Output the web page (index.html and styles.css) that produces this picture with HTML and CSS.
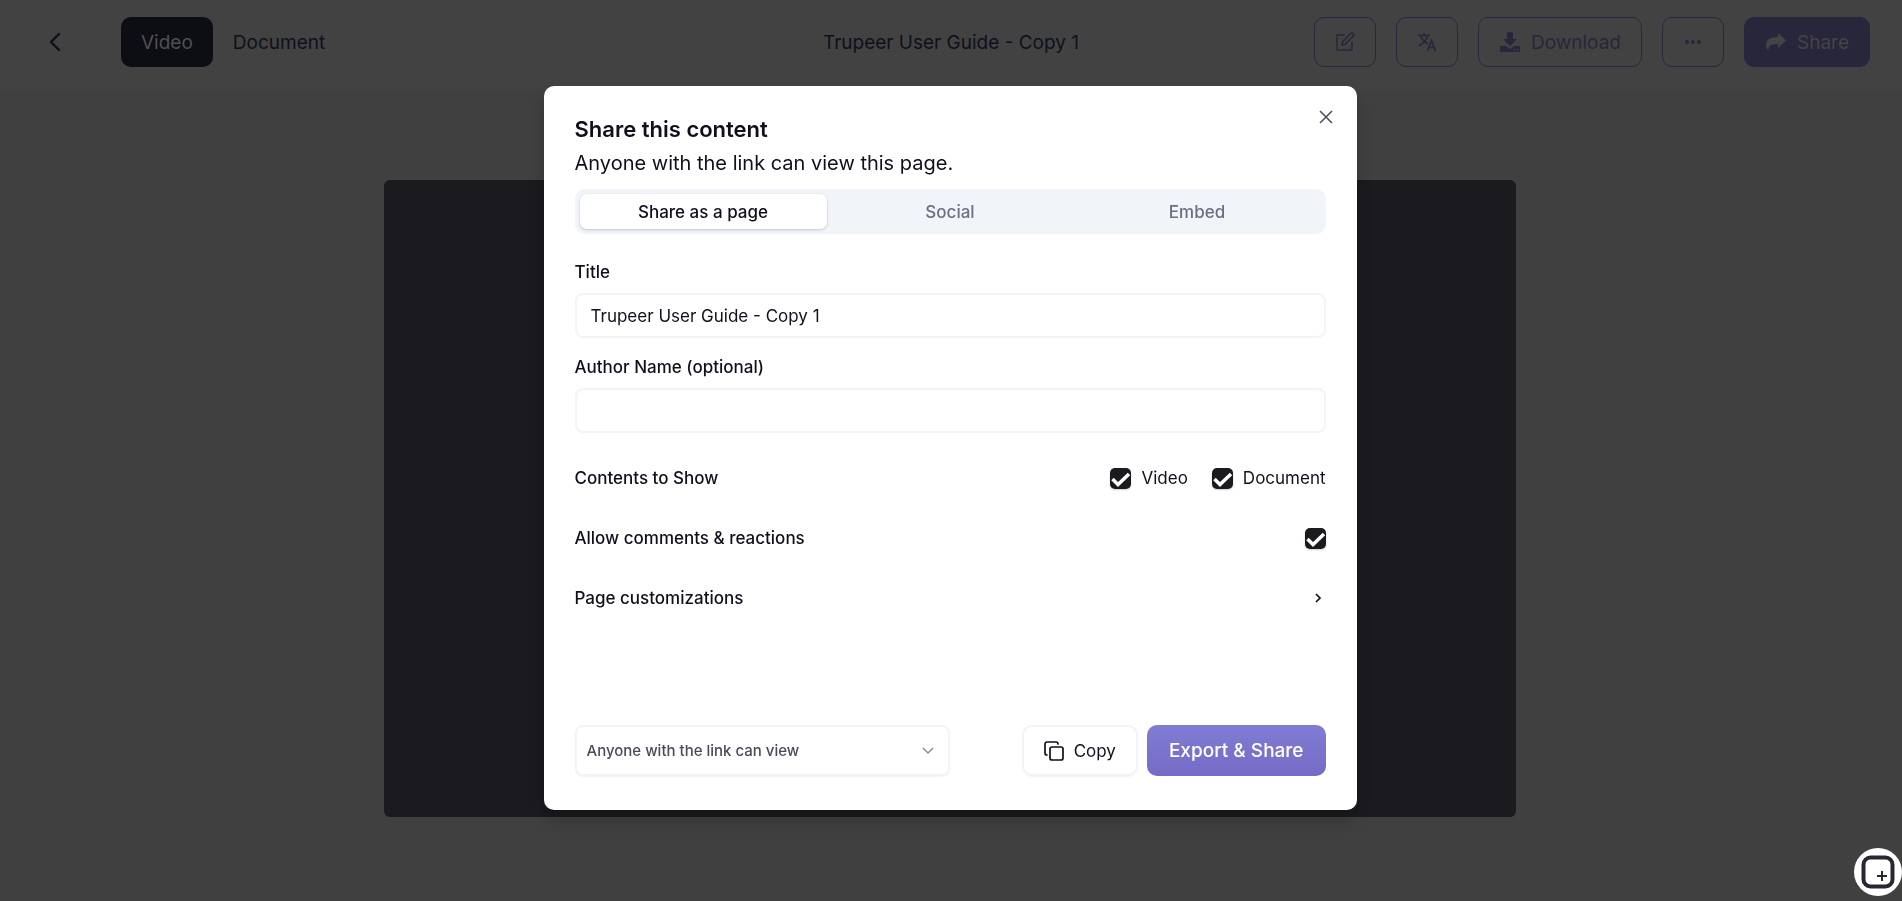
FILE: index.html
```html
<!DOCTYPE html>
<html lang="en">
<head>
    <meta charset="UTF-8">
    <meta name="viewport" content="width=device-width, initial-scale=1.0">
    <title>Trupeer User Guide - Copy 1</title>
    <link rel="stylesheet" href="styles.css">
</head>
<body>
    <header class="topbar">
        <div class="topbar-left">
            <button class="back" aria-label="Back">
                <svg width="12" height="20" viewBox="0 0 12 20" fill="none" stroke="currentColor" stroke-width="2.4" stroke-linecap="round" stroke-linejoin="round"><path d="M10 2 2 10l8 8"/></svg>
            </button>
            <nav class="view-switch">
                <button class="view active">Video</button>
                <button class="view">Document</button>
            </nav>
        </div>
        <div class="doc-name">Trupeer User Guide - Copy 1</div>
        <div class="actions">
            <button class="action icon-only" aria-label="Edit">
                <svg width="22" height="22" viewBox="0 0 22 22" fill="none" stroke="currentColor" stroke-width="1.6" stroke-linejoin="round"><path d="M11 4H3v15h15v-8"/><path d="m8 14 .6-3.4L16.8 2.4a1.4 1.4 0 0 1 2 0l.6.6a1.4 1.4 0 0 1 0 2L11.2 13.3z"/></svg>
            </button>
            <button class="action icon-only" aria-label="Translate">
                <svg width="20" height="20" viewBox="0 0 20 20" fill="none" stroke="currentColor" stroke-width="1.7"><path d="M1 3.5h12M7 1v2.5M3.500 3.500C5 7.500 8 10.500 11 12M11 3.500C9.500 8 6 11.500 2 14"/><path d="m10.500 19 4-10.500 4 10.500M12 15.500h5"/></svg>
            </button>
            <button class="action">
                <svg width="22" height="22" viewBox="0 0 22 22" fill="currentColor"><path d="M8 2a1 1 0 0 1 1-1h4a1 1 0 0 1 1 1v6h4l-7 7-7-7h4z"/><path fill-rule="evenodd" d="M1 15h5.500l4.500 3 4.500-3H21v6H1zm14 3v1.500h1.500V18zm3 0v1.500h1.500V18z"/></svg>
                Download
            </button>
            <button class="action icon-only" aria-label="More">
                <svg width="18" height="6" viewBox="0 0 18 6" fill="currentColor"><circle cx="3" cy="3" r="2"/><circle cx="9" cy="3" r="2"/><circle cx="15" cy="3" r="2"/></svg>
            </button>
            <button class="action filled">
                <svg width="22" height="20" viewBox="0 0 22 20" fill="currentColor"><path d="M13 1v4C5 5 1 8 1 13c0 2.500 1 4.500 2.500 5.500C3 13.500 6 12 13 12v4l8-7.500z"/></svg>
                Share
            </button>
        </div>
    </header>

    <main class="stage">
        <div class="player"></div>
    </main>

    <div class="overlay">
        <section class="modal" role="dialog" aria-labelledby="modalTitle">
            <button class="close" aria-label="Close">
                <svg width="14" height="14" viewBox="0 0 14 14" fill="none" stroke="currentColor" stroke-width="1.5"><path d="m1 1 12 12M13 1 1 13"/></svg>
            </button>
            <h2 id="modalTitle">Share this content</h2>
            <p class="subtitle">Anyone with the link can view this page.</p>

            <div class="tabs" role="tablist">
                <button class="tab active" role="tab" aria-selected="true">Share as a page</button>
                <button class="tab" role="tab" aria-selected="false">Social</button>
                <button class="tab" role="tab" aria-selected="false">Embed</button>
            </div>

            <div class="field">
                <label for="title">Title</label>
                <input type="text" id="title" value="Trupeer User Guide - Copy 1">
            </div>
            <div class="field">
                <label for="author">Author Name (optional)</label>
                <input type="text" id="author">
            </div>

            <div class="options">
                <div class="row">
                    <span>Contents to Show</span>
                    <div class="checks">
                        <label class="check"><input type="checkbox" checked>Video</label>
                        <label class="check"><input type="checkbox" checked>Document</label>
                    </div>
                </div>
                <div class="row">
                    <label for="comments">Allow comments &amp; reactions</label>
                    <input type="checkbox" id="comments" checked>
                </div>
                <button class="row expand">
                    Page customizations
                    <svg width="16" height="16" viewBox="0 0 16 16" fill="none" stroke="currentColor" stroke-width="1.7"><path d="m6 4 4 4-4 4"/></svg>
                </button>
            </div>

            <div class="modal-footer">
                <select aria-label="Who can view">
                    <option>Anyone with the link can view</option>
                </select>
                <div class="footer-buttons">
                    <button class="copy">
                        <svg width="20" height="20" viewBox="0 0 20 20" fill="none" stroke="currentColor" stroke-width="1.7" stroke-linecap="round" stroke-linejoin="round"><rect x="6" y="6" width="13" height="13" rx="2"/><path d="M3 14a2 2 0 0 1-2-2V3a2 2 0 0 1 2-2h9a2 2 0 0 1 2 2"/></svg>
                        Copy
                    </button>
                    <button class="export">Export &amp; Share</button>
                </div>
            </div>
        </section>
    </div>

    <button class="fab" aria-label="New recording">
        <svg width="34" height="34" viewBox="0 0 34 34" fill="none" stroke="currentColor"><rect x="2.500" y="2.500" width="29" height="29" rx="7" stroke-width="4"/><path d="M21 16v10M16 21h10" stroke-width="2"/></svg>
    </button>
</body>
</html>
```
FILE: styles.css
```css
* {
    box-sizing: border-box;
}
body {
    margin: 0;
    min-height: 100vh;
    background-color: #404040;
    color: #0f101c;
    font-family: Inter, "Liberation Sans", sans-serif;
    font-size: 17px;
}
button, input, select {
    font: inherit;
    color: inherit;
}
button {
    display: flex;
    align-items: center;
    justify-content: center;
    padding: 0;
    border: none;
    background: none;
    cursor: pointer;
}

/* Top bar */
.topbar {
    display: grid;
    grid-template-columns: 1fr auto 1fr;
    align-items: center;
    height: 91px;
    padding: 0 32px 7px;
    background-color: #424242;
    font-size: 19px;
}
.topbar-left {
    display: flex;
    align-items: center;
    gap: 60px;
    padding-left: 17px;
}
.view-switch {
    display: flex;
}
.view {
    height: 50px;
    padding: 0 20px;
    border-radius: 10px;
}
.view.active {
    background-color: #0d0e14;
    color: #505050;
}
.actions {
    display: flex;
    justify-content: flex-end;
    gap: 20px;
}
.action {
    gap: 10px;
    height: 50px;
    padding: 0 20px;
    border: 1px solid #28263c;
    border-radius: 10px;
    color: #28263c;
}
.icon-only {
    width: 62px;
    padding: 0;
}
.filled {
    background-color: #28263a;
    color: #444446;
}

/* Video */
.stage {
    padding: 89px 386px 0 384px;
}
.player {
    aspect-ratio: 16 / 9;
    border-radius: 6px;
    background-color: #1b1a1e;
}

/* Share dialog */
.overlay {
    position: fixed;
    inset: 0;
    display: flex;
    align-items: center;
    justify-content: center;
    padding: 0 2px 5px 0;
}
.modal {
    position: relative;
    width: 813px;
    max-width: 100%;
    padding: 29px 31px 34px;
    border-radius: 10px;
    background-color: #fff;
    box-shadow: 0 10px 15px rgba(0, 0, 0, 0.2);
}
.close {
    position: absolute;
    top: 20px;
    right: 20px;
    width: 22px;
    height: 22px;
    color: #484b58;
}
h2 {
    margin: 0;
    font-size: 22px;
    font-weight: 600;
    line-height: 28px;
}
.subtitle {
    margin: 5px 0 11px;
    font-size: 20px;
    line-height: 30px;
}
.tabs {
    display: grid;
    grid-template-columns: repeat(3, 1fr);
    padding: 5px;
    margin-bottom: 27px;
    border-radius: 10px;
    background-color: #f1f5f9;
}
.tab {
    height: 35px;
    border-radius: 7px;
    color: #6b7080;
    font-weight: 500;
}
.tab.active {
    background-color: #fff;
    color: #0f101c;
    box-shadow: 0 1px 3px rgba(0, 0, 0, 0.2);
}
.field {
    margin-bottom: 18px;
}
.field label {
    display: block;
    margin-bottom: 10px;
    line-height: 22px;
    font-weight: 500;
}
.field input {
    display: block;
    width: 100%;
    height: 45px;
    padding: 0 14px;
    border: 2px solid #f1f5f9;
    border-radius: 8px;
    background-color: #fff;
}
.options {
    display: flex;
    flex-direction: column;
    gap: 30px;
    margin-top: 30px;
}
.row {
    display: flex;
    align-items: center;
    justify-content: space-between;
    height: 30px;
    font-weight: 500;
}
.checks {
    display: flex;
    gap: 24px;
}
.check {
    display: flex;
    align-items: center;
    gap: 10px;
    font-weight: 400;
}
input[type="checkbox"] {
    appearance: none;
    width: 21px;
    height: 21px;
    margin: 0;
    border-radius: 5px;
    box-shadow: 0 1px 2px rgba(0, 0, 0, 0.2);
}
input[type="checkbox"]:checked {
    background: #1b1a1e url("data:image/svg+xml,%3Csvg xmlns='http://www.w3.org/2000/svg' viewBox='0 0 21 21' fill='none' stroke='white' stroke-width='3.5'%3E%3Cpath d='m2.5 11 5.5 5.500L19 6'/%3E%3C/svg%3E") center / 21px no-repeat;
}
.modal-footer {
    display: flex;
    align-items: center;
    justify-content: space-between;
    margin-top: 112px;
}
select {
    appearance: none;
    width: 50%;
    height: 51px;
    padding: 0 40px 0 10px;
    border: 2px solid #f1f5f9;
    border-radius: 8px;
    background: #fff url("data:image/svg+xml,%3Csvg xmlns='http://www.w3.org/2000/svg' viewBox='0 0 12 8' fill='none' stroke='%23888c98' stroke-width='1.5'%3E%3Cpath d='m1 1 5 5 5-5'/%3E%3C/svg%3E") right 14px center / 12px 8px no-repeat;
    box-shadow: 0 1px 2px rgba(0, 0, 0, 0.05);
    color: #484b58;
    font-size: 15px;
    font-weight: 500;
}
.footer-buttons {
    display: flex;
    gap: 9px;
}
.copy {
    gap: 10px;
    height: 51px;
    padding: 0 20px;
    border: 2px solid #f1f5f9;
    border-radius: 10px;
    box-shadow: 0 1px 2px rgba(0, 0, 0, 0.05);
}
.export {
    height: 51px;
    padding: 0 22px;
    border-radius: 10px;
    background: linear-gradient(#807cd4, #756bc6);
    color: #fff;
    font-size: 19px;
    font-weight: 500;
}

/* Recorder button over everything */
.fab {
    position: fixed;
    right: 0;
    bottom: 5px;
    width: 48px;
    height: 48px;
    border-radius: 50%;
    background-color: #fff;
    color: #282834;
}
```
